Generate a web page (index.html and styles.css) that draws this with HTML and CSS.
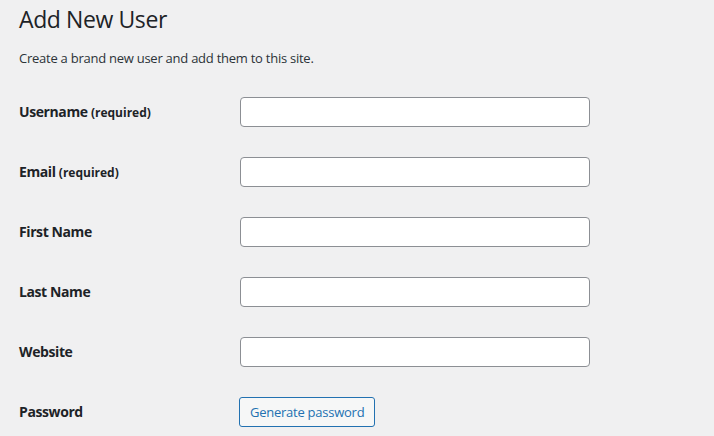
FILE: index.html
```html
<!DOCTYPE html>
<html lang="en">
<head>
<meta charset="utf-8">
<title>Add New User</title>
<link rel="stylesheet" href="styles.css">
</head>
<body>
<div class="wrap">
  <h1 class="title">Add New User</h1>
  <p class="intro">Create a brand new user and add them to this site.</p>
  <form class="form">
    <div class="row">
      <label class="label" for="user_login">Username <span class="req">(required)</span></label>
      <input class="field" id="user_login" type="text">
    </div>
    <div class="row">
      <label class="label" for="email">Email <span class="req">(required)</span></label>
      <input class="field" id="email" type="email">
    </div>
    <div class="row">
      <label class="label" for="first_name">First Name</label>
      <input class="field" id="first_name" type="text">
    </div>
    <div class="row">
      <label class="label" for="last_name">Last Name</label>
      <input class="field" id="last_name" type="text">
    </div>
    <div class="row">
      <label class="label" for="url">Website</label>
      <input class="field" id="url" type="url">
    </div>
    <div class="row">
      <span class="label">Password</span>
      <button class="button" type="button">Generate password</button>
    </div>
  </form>
</div>
</body>
</html>
```
FILE: styles.css
```css
html, body {
  margin: 0;
  padding: 0;
  background: #f0f0f1;
}
body {
  font-family: "Open Sans", "Noto Sans", sans-serif;
  color: #1d2327;
  font-size: 13px;
}
.wrap {
  padding: 0 20px 0 19px;
}
.title {
  margin: 0;
  padding: 4px 0 0;
  font-size: 23px;
  font-weight: 400;
  line-height: 30px;
  letter-spacing: -0.4px;
}
.intro {
  margin: 14px 0 0;
  font-size: 13px;
  line-height: 20px;
  color: #2c3338;
  letter-spacing: -0.25px;
}
.form {
  display: flex;
  flex-direction: column;
  margin-top: 14px;
}
.row {
  display: grid;
  grid-template-columns: 221px 350px;
  align-items: center;
  height: 60px;
}
.label {
  padding-bottom: 2px;
  font-size: 14px;
  font-weight: 700;
  color: #1d2327;
  letter-spacing: -0.4px;
}
.req {
  font-size: 12px;
  letter-spacing: 0;
}
.field {
  box-sizing: border-box;
  width: 350px;
  height: 30px;
  margin: 0;
  border: 1px solid #8c8f94;
  border-radius: 4px;
  background: #fff;
  padding: 0 8px;
}
.button {
  justify-self: start;
  margin-left: -1px;
  height: 30px;
  padding: 0 10px;
  border: 1px solid #2271b1;
  border-radius: 3px;
  background: #f6f7f7;
  color: #2271b1;
  font-family: inherit;
  font-size: 13px;
  letter-spacing: -0.25px;
}
```
